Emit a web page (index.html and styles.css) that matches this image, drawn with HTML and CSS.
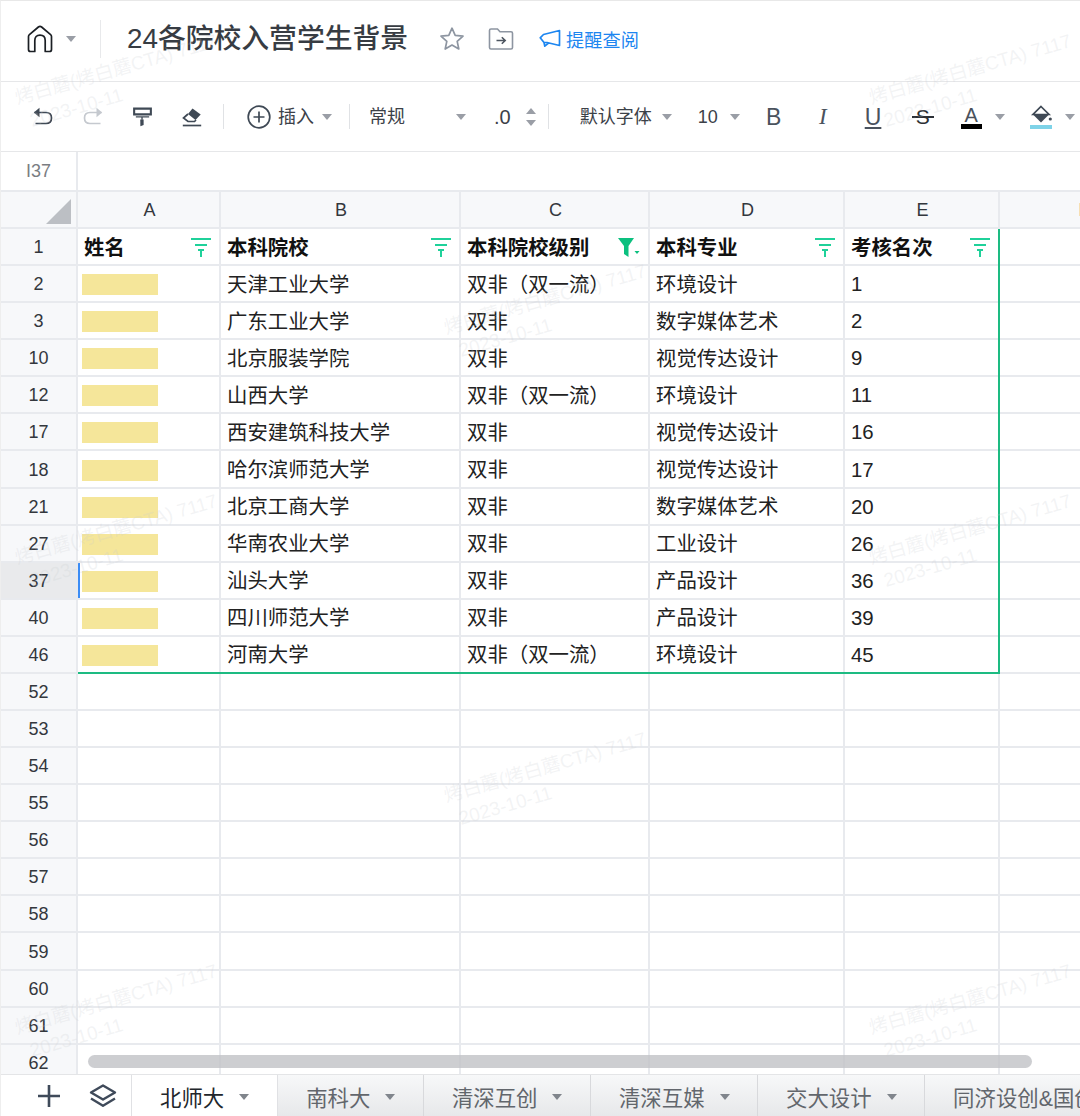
FILE: index.html
```html
<!DOCTYPE html>
<html lang="zh-CN">
<head>
<meta charset="utf-8">
<title>24各院校入营学生背景</title>
<link rel="stylesheet" href="styles.css">
</head>
<body>
<div class="app">
  <header class="topbar">
    <svg class="home" viewBox="0 0 26 28"><path d="M1.5 11.5Q1.5 10.4 2.4 9.6L11.4 2Q13 .8 14.6 2L23.6 9.6Q24.5 10.4 24.5 11.5V24.5Q24.5 26.5 22.5 26.5H18.2V15.5Q18.2 10.2 13 10.2T7.8 15.5V26.5H3.5Q1.5 26.5 1.5 24.5Z"/></svg>
    <span class="caret home-caret"></span>
    <span class="top-sep"></span>
    <h1 class="title">24各院校入营学生背景</h1>
    <svg class="star" viewBox="0 0 26 26"><path d="M13 2.2L16.2 9.3 24 10.1 18.2 15.3 19.8 23 13 19.1 6.2 23 7.8 15.3 2 10.1 9.8 9.3Z"/></svg>
    <svg class="folder" viewBox="0 0 26 24"><path class="outline" d="M1.5 3.5Q1.5 2 3 2H9.5L12 4.8H23Q24.5 4.8 24.5 6.3V20.5Q24.5 22 23 22H3Q1.5 22 1.5 20.5Z"/><path class="arrow" d="M8.5 13.5H17M13.8 10.2L17.2 13.5 13.8 16.8"/></svg>
    <svg class="mega" viewBox="0 0 22 20"><path d="M20.5 1.5V16.5L8 13.5H5L1.2 8.8 4.5 5.5ZM5 13.5L5.8 17.2 9.5 14"/></svg>
    <span class="remind">提醒查阅</span>
  </header>

  <div class="toolbar">
    <svg class="ti t-undo" viewBox="0 0 20 20"><path d="M1.5 5.5H13Q18.5 5.5 18.5 11T13 16.5H2.5"/><path class="solid" d="M6.5 .8V10.2L.8 5.5Z"/></svg>
    <svg class="ti t-redo" viewBox="0 0 20 20"><path d="M18.5 5.5H7Q1.5 5.5 1.5 11T7 16.5H17.5"/><path class="solid" d="M13.5 .8V10.2L19.2 5.5Z"/></svg>
    <svg class="ti t-roller" viewBox="0 0 20 20"><path d="M1.2 1.2H18.8V7.2H1.2Z"/><path class="thin" d="M3 9.8H17M9.5 9.8V13"/><path class="solid" d="M7.6 12.5H11.2V18.5L7.8 19.8Z"/></svg>
    <svg class="ti t-eraser" viewBox="0 0 20 20"><path class="solid" d="M10.5 1.5L18.7 7.5 13.5 13 6 7Z"/><path d="M6 7L1.5 11 6 14.5H12.5L14 13"/><path d="M.8 18.5H19.2"/></svg>
    <span class="sep s1"></span>
    <svg class="ti t-plus" viewBox="0 0 24 24"><circle cx="12" cy="12" r="10.8"/><path d="M12 6.5V17.5M6.5 12H17.5"/></svg>
    <span class="tb-text t-insert">插入</span>
    <span class="caret c-insert"></span>
    <span class="sep s2"></span>
    <span class="tb-text t-format">常规</span>
    <span class="caret c-format"></span>
    <span class="tb-text t-dec">.0</span>
    <span class="spin"><span class="up"></span><span class="down"></span></span>
    <span class="sep s3"></span>
    <span class="tb-text t-font">默认字体</span>
    <span class="caret c-font"></span>
    <span class="tb-text t-size">10</span>
    <span class="caret c-size"></span>
    <span class="fmt f-b">B</span>
    <span class="fmt f-i">I</span>
    <span class="fmt f-u">U</span>
    <span class="fmt f-s">S</span>
    <span class="fmt f-a">A</span>
    <span class="caret c-a"></span>
    <svg class="ti t-fill" viewBox="0 0 22 24"><path d="M11 1.5L19 9.5H3Z"/><path class="solid" d="M3 9.5H19L11 17.5Z"/><circle class="dot" cx="20.3" cy="14" r="1.6"/><rect class="fillbar" x="0" y="20" width="22" height="4"/></svg>
    <span class="caret c-fill"></span>
  </div>

  <div class="formula"><span class="cellname">I37</span></div>

  <main class="sheet">
    <div class="grid">
      <div class="corner"><span class="tri"></span></div>
      <div class="ch">A</div><div class="ch">B</div><div class="ch">C</div><div class="ch">D</div><div class="ch">E</div><div class="ch">F</div>

      <div class="rh">1</div>
      <div class="c head">姓名<svg class="flt" viewBox="0 0 20 19"><path d="M0 1H20M4 7H16M7 12H13M10 12V19"/></svg></div>
      <div class="c head">本科院校<svg class="flt" viewBox="0 0 20 19"><path d="M0 1H20M4 7H16M7 12H13M10 12V19"/></svg></div>
      <div class="c head">本科院校级别<svg class="flt-on" viewBox="0 0 22 19"><path class="fn" d="M0 0H16L10.5 8V19L6 16V8Z"/><path class="fn" d="M16.5 13H21.5L19 16Z"/></svg></div>
      <div class="c head">本科专业<svg class="flt" viewBox="0 0 20 19"><path d="M0 1H20M4 7H16M7 12H13M10 12V19"/></svg></div>
      <div class="c head">考核名次<svg class="flt" viewBox="0 0 20 19"><path d="M0 1H20M4 7H16M7 12H13M10 12V19"/></svg></div>
      <div class="c"></div>

      <div class="rh">2</div><div class="c"><span class="mask"></span></div><div class="c">天津工业大学</div><div class="c">双非（双一流）</div><div class="c">环境设计</div><div class="c num">1</div><div class="c"></div>
      <div class="rh">3</div><div class="c"><span class="mask"></span></div><div class="c">广东工业大学</div><div class="c">双非</div><div class="c">数字媒体艺术</div><div class="c num">2</div><div class="c"></div>
      <div class="rh">10</div><div class="c"><span class="mask"></span></div><div class="c">北京服装学院</div><div class="c">双非</div><div class="c">视觉传达设计</div><div class="c num">9</div><div class="c"></div>
      <div class="rh">12</div><div class="c"><span class="mask"></span></div><div class="c">山西大学</div><div class="c">双非（双一流）</div><div class="c">环境设计</div><div class="c num">11</div><div class="c"></div>
      <div class="rh">17</div><div class="c"><span class="mask"></span></div><div class="c">西安建筑科技大学</div><div class="c">双非</div><div class="c">视觉传达设计</div><div class="c num">16</div><div class="c"></div>
      <div class="rh">18</div><div class="c"><span class="mask"></span></div><div class="c">哈尔滨师范大学</div><div class="c">双非</div><div class="c">视觉传达设计</div><div class="c num">17</div><div class="c"></div>
      <div class="rh">21</div><div class="c"><span class="mask"></span></div><div class="c">北京工商大学</div><div class="c">双非</div><div class="c">数字媒体艺术</div><div class="c num">20</div><div class="c"></div>
      <div class="rh">27</div><div class="c"><span class="mask"></span></div><div class="c">华南农业大学</div><div class="c">双非</div><div class="c">工业设计</div><div class="c num">26</div><div class="c"></div>
      <div class="rh rh-on">37</div><div class="c"><span class="mask"></span></div><div class="c">汕头大学</div><div class="c">双非</div><div class="c">产品设计</div><div class="c num">36</div><div class="c"></div>
      <div class="rh">40</div><div class="c"><span class="mask"></span></div><div class="c">四川师范大学</div><div class="c">双非</div><div class="c">产品设计</div><div class="c num">39</div><div class="c"></div>
      <div class="rh">46</div><div class="c"><span class="mask"></span></div><div class="c">河南大学</div><div class="c">双非（双一流）</div><div class="c">环境设计</div><div class="c num">45</div><div class="c"></div>

      <div class="rh">52</div><div class="c"></div><div class="c"></div><div class="c"></div><div class="c"></div><div class="c"></div><div class="c"></div>
      <div class="rh">53</div><div class="c"></div><div class="c"></div><div class="c"></div><div class="c"></div><div class="c"></div><div class="c"></div>
      <div class="rh">54</div><div class="c"></div><div class="c"></div><div class="c"></div><div class="c"></div><div class="c"></div><div class="c"></div>
      <div class="rh">55</div><div class="c"></div><div class="c"></div><div class="c"></div><div class="c"></div><div class="c"></div><div class="c"></div>
      <div class="rh">56</div><div class="c"></div><div class="c"></div><div class="c"></div><div class="c"></div><div class="c"></div><div class="c"></div>
      <div class="rh">57</div><div class="c"></div><div class="c"></div><div class="c"></div><div class="c"></div><div class="c"></div><div class="c"></div>
      <div class="rh">58</div><div class="c"></div><div class="c"></div><div class="c"></div><div class="c"></div><div class="c"></div><div class="c"></div>
      <div class="rh">59</div><div class="c"></div><div class="c"></div><div class="c"></div><div class="c"></div><div class="c"></div><div class="c"></div>
      <div class="rh">60</div><div class="c"></div><div class="c"></div><div class="c"></div><div class="c"></div><div class="c"></div><div class="c"></div>
      <div class="rh">61</div><div class="c"></div><div class="c"></div><div class="c"></div><div class="c"></div><div class="c"></div><div class="c"></div>
      <div class="rh">62</div><div class="c"></div><div class="c"></div><div class="c"></div><div class="c"></div><div class="c"></div><div class="c"></div>
    </div>
    <div class="frame"></div>
    <div class="scrollbar"></div>
  </main>

  <nav class="tabs">
    <div class="tab-tools">
      <svg class="add" viewBox="0 0 22 22"><path d="M11 0V22M0 11H22"/></svg>
      <svg class="layers" viewBox="0 0 28 24"><path d="M14 1.5L26 8.5 14 15.5 2 8.5Z"/><path d="M2 14.5L14 21.8 26 14.5"/></svg>
    </div>
    <div class="tab active">北师大<span class="caret"></span></div>
    <div class="tab">南科大<span class="caret"></span></div>
    <div class="tab">清深互创<span class="caret"></span></div>
    <div class="tab">清深互媒<span class="caret"></span></div>
    <div class="tab">交大设计<span class="caret"></span></div>
    <div class="tab">同济设创&amp;国创<span class="caret"></span></div>
  </nav>

  <div class="wm wm1">烤白蘑(烤白蘑CTA) 7117<br><span class="wd">2023-10-11</span></div>
  <div class="wm wm2">烤白蘑(烤白蘑CTA) 7117<br><span class="wd">2023-10-11</span></div>
  <div class="wm wm3">烤白蘑(烤白蘑CTA) 7117<br><span class="wd">2023-10-11</span></div>
  <div class="wm wm4">烤白蘑(烤白蘑CTA) 7117<br><span class="wd">2023-10-11</span></div>
  <div class="wm wm5">烤白蘑(烤白蘑CTA) 7117<br><span class="wd">2023-10-11</span></div>
  <div class="wm wm6">烤白蘑(烤白蘑CTA) 7117<br><span class="wd">2023-10-11</span></div>
  <div class="wm wm7">烤白蘑(烤白蘑CTA) 7117<br><span class="wd">2023-10-11</span></div>
  <div class="wm wm8">烤白蘑(烤白蘑CTA) 7117<br><span class="wd">2023-10-11</span></div>
</div>
</body>
</html>
```
FILE: styles.css
```css
* { box-sizing: border-box; }
html, body { margin: 0; padding: 0; background: #fff; }
body { font-family: "Liberation Sans", "Noto Sans CJK SC", sans-serif; color: #222; }
.app { position: relative; width: 1080px; height: 1116px; overflow: hidden; display: flex; flex-direction: column; border-top: 1px solid #e8e8e8; border-left: 1px solid #eee; }

.caret { display: inline-block; width: 0; height: 0; border-left: 5px solid transparent; border-right: 5px solid transparent; border-top: 6px solid #9a9ea6; flex: none; }

/* top bar */
.topbar { height: 81px; flex: none; display: flex; align-items: center; border-bottom: 1px solid #e6e7e9; padding-bottom: 4px; }
.home { width: 26px; height: 28px; margin-left: 26px; fill: none; stroke: #1b1f24; stroke-width: 1.7; stroke-linejoin: round; }
.home-caret { margin-left: 13px; }
.top-sep { width: 1px; height: 38px; background: #e8e9eb; margin-left: 24px; }
.title { margin: 0 0 0 26px; font-size: 27.8px; font-weight: 500; color: #373c43; white-space: nowrap; line-height: 38px; }
.star { width: 26px; height: 26px; margin-left: 31px; fill: none; stroke: #8d95a1; stroke-width: 1.7; stroke-linejoin: round; }
.folder { width: 26px; height: 24px; margin-left: 23px; fill: none; stroke: #8d95a1; stroke-width: 1.6; }
.folder .arrow { stroke: #4d5560; }
.mega { width: 22px; height: 20px; margin-left: 25px; fill: none; stroke: #1d86f0; stroke-width: 1.7; stroke-linejoin: round; }
.remind { margin-left: 5px; font-size: 18.2px; color: #1d86f0; white-space: nowrap; }

/* toolbar */
.toolbar { height: 70px; flex: none; display: flex; align-items: center; border-bottom: 1px solid #e6e7e9; }
.ti { flex: none; fill: none; stroke: #3f4955; stroke-width: 1.7; }
.ti .solid { fill: #3f4955; stroke: none; }
.t-undo { width: 20px; height: 20px; margin-left: 32px; }
.t-redo { width: 20px; height: 20px; margin-left: 30px; stroke: #c5c9cf; }
.t-redo .solid { fill: #c5c9cf; }
.t-roller { width: 19px; height: 20px; margin-left: 30px; stroke-width: 2.2; }
.t-roller .thin { stroke-width: 1.4; }
.t-eraser { width: 20px; height: 20px; margin-left: 30px; }
.sep { flex: none; width: 1px; height: 25px; background: #e0e2e5; }
.s1 { margin-left: 21px; }
.t-plus { width: 24px; height: 24px; margin-left: 23px; }
.tb-text { flex: none; font-size: 18px; color: #3c4148; white-space: nowrap; line-height: 24px; }
.t-insert { margin-left: 7px; }
.c-insert { margin-left: 8px; }
.s2 { margin-left: 17px; }
.t-format { margin-left: 19px; }
.c-format { margin-left: 51px; }
.t-dec { margin-left: 28px; font-size: 20px; }
.spin { flex: none; display: flex; flex-direction: column; gap: 6px; margin-left: 15px; }
.spin .up { width: 0; height: 0; border-left: 5px solid transparent; border-right: 5px solid transparent; border-bottom: 6px solid #9a9ea6; }
.spin .down { width: 0; height: 0; border-left: 5px solid transparent; border-right: 5px solid transparent; border-top: 6px solid #9a9ea6; }
.s3 { margin-left: 12px; }
.t-font { margin-left: 31px; }
.c-font { margin-left: 10px; }
.t-size { margin-left: 26px; }
.c-size { margin-left: 12px; }
.fmt { position: relative; flex: none; font-size: 23px; line-height: 24px; color: #4a525d; text-align: center; }
.f-b { width: 16px; margin-left: 26px; }
.f-i { width: 14px; margin-left: 34px; font-family: "Liberation Serif", serif; font-style: italic; }
.f-u { width: 16px; margin-left: 35px; text-decoration: underline; text-decoration-thickness: 2px; text-underline-offset: 2px; }
.f-s { width: 16px; margin-left: 34px; font-size: 21px; color: #2b2f35; }
.f-s::after { content: ""; position: absolute; left: -3px; right: -3px; top: 11px; height: 2px; background: #2b2f35; }
.f-a { width: 21px; margin-left: 30px; height: 24px; border-bottom: 5px solid #000; font-size: 20px; line-height: 20px; }
.c-a { margin-left: 13px; }
.t-fill { width: 22px; height: 24px; margin-left: 25px; }
.t-fill .dot { fill: #3f4955; stroke: none; }
.t-fill .fillbar { fill: #7ed3e8; stroke: none; }
.c-fill { margin-left: 13px; }

/* formula bar */
.formula { height: 40px; flex: none; display: flex; border-bottom: 2px solid #e8eaee; }
.cellname { width: 77px; display: flex; align-items: center; justify-content: center; font-size: 18px; color: #7a7d82; border-right: 2px solid #e8eaee; }

/* sheet */
.sheet { position: relative; flex: 1; overflow: hidden; }
.grid { display: grid; grid-template-columns: 77px 143px 240px 189px 195px 155px 168px; grid-template-rows: 37px; grid-auto-rows: 37.09px; width: 1167px; }
.corner, .ch, .rh { background: #f7f8fa; border-right: 2px solid #e8eaee; border-bottom: 2px solid #e8eaee; }
.corner { position: relative; }
.tri { position: absolute; right: 5px; bottom: 3px; width: 0; height: 0; border-left: 25px solid transparent; border-bottom: 25px solid #bcbfc4; }
.ch, .rh { display: flex; align-items: center; justify-content: center; font-size: 18px; color: #33373d; padding-top: 2px; }
.ch { padding-left: 2px; }
.rh-on { background: #e9eaec; box-shadow: 2px 0 0 #3b8cf5; position: relative; }
.c { position: relative; display: flex; align-items: center; padding: 0 0 2px 6px; font-size: 20.4px; color: #222; white-space: nowrap; border-right: 2px solid #e8eaee; border-bottom: 2px solid #e8eaee; }
.c.num { padding: 2px 0 0 6px; }
.head { font-weight: 700; color: #111; }
.mask { width: 76px; height: 21px; margin: 4px 0 0 -2px; background: #f5e69a; }
.flt { position: absolute; right: 8px; top: 9px; width: 20px; height: 19px; fill: none; stroke: #1fd19a; stroke-width: 2; }
.flt-on { position: absolute; right: 8px; top: 9px; width: 22px; height: 19px; }
.fn { fill: #0cc07f; }
.frame { position: absolute; left: 77px; top: 37px; width: 922px; height: 445px; border-right: 2px solid #1dbb82; border-bottom: 2px solid #1dbb82; pointer-events: none; }
.scrollbar { position: absolute; left: 87px; top: 863px; width: 944px; height: 13px; border-radius: 7px; background: rgba(192, 194, 198, .8); }

/* tabs */
.tabs { height: 42px; flex: none; display: flex; border-top: 1px solid #e4e5e7; background: #fff; position: relative; }
.tab-tools { width: 131px; flex: none; display: flex; align-items: center; padding-left: 37px; gap: 29px; border-right: 1px solid #e0e1e4; }
.add { width: 22px; height: 22px; fill: none; stroke: #3f4a5a; stroke-width: 2.6; }
.layers { width: 28px; height: 24px; fill: none; stroke: #3f4a5a; stroke-width: 2.4; stroke-linejoin: round; }
.tab { flex: none; display: flex; align-items: center; gap: 15px; padding: 2px 27.5px 0 28px; font-size: 21.4px; color: #62666c; white-space: nowrap; border-right: 1px solid #d8d9dc; background: linear-gradient(#f7f8f9, #e7e8ea); }
.tab .caret { border-top-color: #80858c; }
.tab.active { background: #fff; color: #22262b; border-right: 1px solid #e0e1e4; padding-right: 28px; }

/* watermarks */
.wm { position: absolute; width: 260px; font-size: 19px; line-height: 26px; color: rgba(200, 203, 208, .22); transform: rotate(-16deg); transform-origin: 0 0; white-space: nowrap; pointer-events: none; }
.wd { margin-left: 8px; }
.wm1 { left: 11px; top: 85px; }
.wm2 { left: 865px; top: 85px; }
.wm3 { left: 440px; top: 315px; }
.wm4 { left: 11px; top: 545px; }
.wm5 { left: 865px; top: 545px; }
.wm6 { left: 440px; top: 783px; }
.wm7 { left: 11px; top: 1015px; }
.wm8 { left: 865px; top: 1015px; }
```
